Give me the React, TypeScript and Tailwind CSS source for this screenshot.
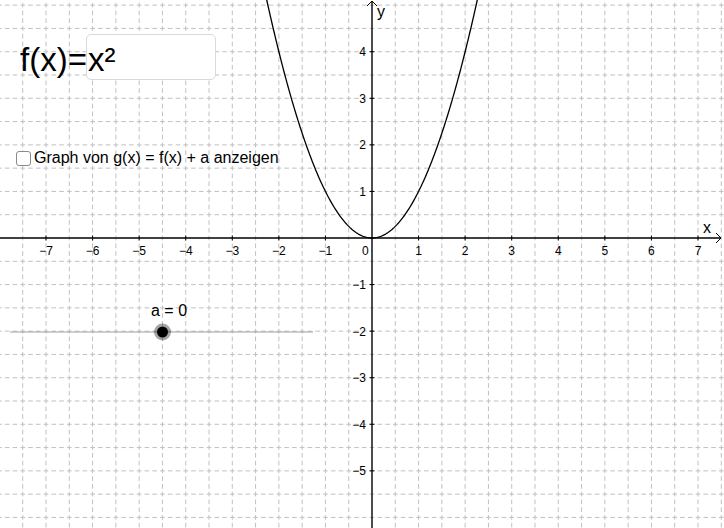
import React from 'react';

const W = 724;
const H = 528;
const OX = 372;
const OY = 238;
const UNIT = 46.57;
const STEP = UNIT / 2;
const DASH = STEP / 3; // 3 dashes per grid cell, one centred on each crossing
const FONT = '"Liberation Sans", Arial, sans-serif';

function GridLines() {
  const lines: React.ReactNode[] = [];
  const startX = OX - DASH * 0.3 - DASH * 120;
  const startY = OY - DASH * 0.3 - DASH * 120;
  for (let k = -17; k <= 16; k++) {
    const x = OX + k * STEP;
    if (k === 0) continue;
    lines.push(
      <line key={'v' + k} x1={x} y1={startY} x2={x} y2={H} stroke="#c0c0c0" strokeWidth={1} strokeDasharray={`${DASH * 0.6} ${DASH * 0.4}`} />
    );
  }
  for (let k = -11; k <= 13; k++) {
    const y = OY + k * STEP;
    if (k === 0) continue;
    lines.push(
      <line key={'h' + k} x1={startX} y1={y} x2={W} y2={y} stroke="#c0c0c0" strokeWidth={1} strokeDasharray={`${DASH * 0.6} ${DASH * 0.4}`} />
    );
  }
  return <g>{lines}</g>;
}

function Axes() {
  const ticks: React.ReactNode[] = [];
  for (let i = -7; i <= 7; i++) {
    if (i === 0) continue;
    const x = OX + i * UNIT;
    ticks.push(<line key={'tx' + i} x1={x} y1={OY - 2.5} x2={x} y2={OY + 2.5} stroke="#000" strokeWidth={1} />);
    ticks.push(
      <text key={'lx' + i} x={x} y={OY + 16.5} fontSize={12} textAnchor="middle" fill="#000" fontFamily={FONT}>
        {i < 0 ? `\u2212${-i}` : i}
      </text>
    );
  }
  for (let i = -5; i <= 4; i++) {
    if (i === 0) continue;
    const y = OY - i * UNIT;
    ticks.push(<line key={'ty' + i} x1={OX - 2.5} y1={y} x2={OX + 2.5} y2={y} stroke="#000" strokeWidth={1} />);
    ticks.push(
      <text key={'ly' + i} x={OX - 6} y={y + 4.5} fontSize={12} textAnchor="end" fill="#000" fontFamily={FONT}>
        {i < 0 ? `\u2212${-i}` : i}
      </text>
    );
  }
  return (
    <g>
      <line x1={0} y1={OY} x2={W - 3} y2={OY} stroke="#000" strokeWidth={1.4} />
      <line x1={OX} y1={1} x2={OX} y2={H} stroke="#000" strokeWidth={1.4} />
      <polyline points={`${W - 8},${OY - 5} ${W - 3},${OY} ${W - 8},${OY + 5}`} fill="none" stroke="#000" strokeWidth={1} />
      <polyline points={`${OX - 5},${6} ${OX},${1} ${OX + 5},${6}`} fill="none" stroke="#000" strokeWidth={1} />
      {ticks}
      <text x={OX - 10} y={OY + 16.5} fontSize={12} fill="#000" fontFamily={FONT}>0</text>
      <text x={703} y={233} fontSize={16} fill="#000" fontFamily={FONT}>x</text>
      <text x={377} y={17} fontSize={16} fill="#000" fontFamily={FONT}>y</text>
    </g>
  );
}

function Parabola() {
  const pts: string[] = [];
  for (let px = 260; px <= 484; px += 1) {
    const x = (px - OX) / UNIT;
    const py = OY - x * x * UNIT;
    if (py < -20) continue;
    pts.push(`${px},${py.toFixed(2)}`);
  }
  return <polyline points={pts.join(' ')} fill="none" stroke="#000" strokeWidth={1.3} />;
}

export default function App() {
  return (
    <div className="relative w-[724px] h-[528px] bg-white overflow-hidden" style={{ fontFamily: FONT }}>
      <svg className="absolute inset-0" width={W} height={H} viewBox={`0 0 ${W} ${H}`}>
        <GridLines />
        <Axes />
        <Parabola />
        {/* slider */}
        <line x1={10} y1={332} x2={313} y2={332} stroke="#a0a0a0" strokeWidth={1} />
        <circle cx={162.5} cy={332} r={8.5} fill="#000" fillOpacity={0.35} />
        <circle cx={162.5} cy={332} r={5.5} fill="#000" />
        <text x={151} y={316} fontSize={16} fill="#000" fontFamily={FONT}>a = 0</text>
      </svg>

      {/* input box */}
      <div className="absolute left-[20px] top-[34px] flex items-center">
        <span className="w-[66px] pt-[4px] text-[33px] leading-none text-black">f(x)=</span>
        <div className="w-[130px] h-[46px] rounded-[5px] border border-[#d9d9d9] bg-white flex items-center pl-[1px]">
          <span className="pt-[4px] text-[33px] leading-none text-black">x²</span>
        </div>
      </div>

      {/* checkbox */}
      <label className="absolute left-[16px] top-[150px] flex items-center gap-[3px]">
        <span className="w-[15px] h-[15px] rounded-[3px] border-[1.5px] border-[#8a8a8a] bg-white" />
        <span className="text-[16px] text-black leading-none">Graph von g(x) = f(x) + a anzeigen</span>
      </label>
    </div>
  );
}
